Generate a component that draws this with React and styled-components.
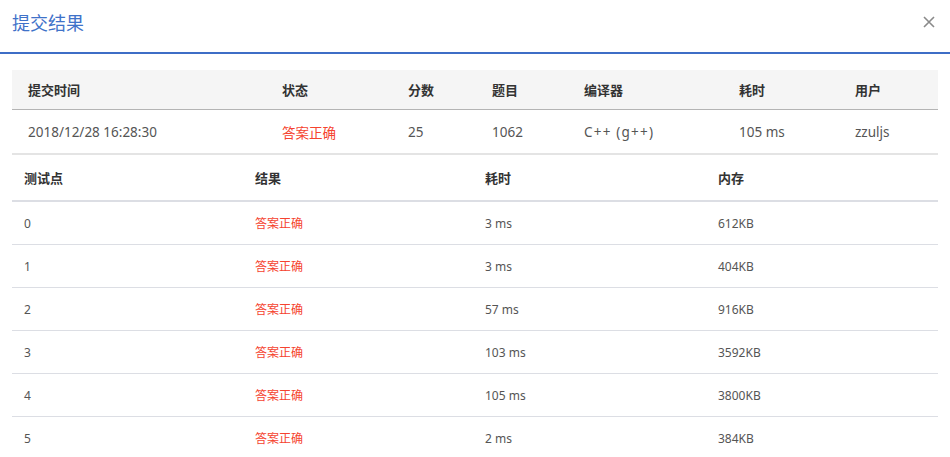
import React from 'react';
import styled, { createGlobalStyle } from 'styled-components';

const GlobalStyle = createGlobalStyle`
  body {
    margin: 0;
    background: #ffffff;
    font-family: "Noto Sans", "Noto Sans CJK SC", sans-serif;
  }
`;

// column widths read off the screenshot
const summaryCols = '254px 126px 84px 92px 155px 116px 1fr';
const caseCols = '231px 230px 233px 1fr';

const summary = {
  head: ['提交时间', '状态', '分数', '题目', '编译器', '耗时', '用户'],
  row: ['2018/12/28 16:28:30', '答案正确', '25', '1062', 'C++ (g++)', '105 ms', 'zzuljs'],
};

const cases = [
  { id: 0, time: '3 ms', mem: '612KB' },
  { id: 1, time: '3 ms', mem: '404KB' },
  { id: 2, time: '57 ms', mem: '916KB' },
  { id: 3, time: '103 ms', mem: '3592KB' },
  { id: 4, time: '105 ms', mem: '3800KB' },
  { id: 5, time: '2 ms', mem: '384KB' },
];

const App = () => {
  return (
    <>
      <GlobalStyle />
      <Modal>
        <Header>
          <Title>提交结果</Title>
          <Close aria-label="close">
            <svg width="12" height="12" viewBox="0 0 12 12">
              <path d="M1 1L11 11M11 1L1 11" stroke="#8a8a8a" strokeWidth="1.6" />
            </svg>
          </Close>
        </Header>
        <Body>
          <SummaryHead>
            {summary.head.map((h) => (
              <SummaryCell key={h} bold>
                {h}
              </SummaryCell>
            ))}
          </SummaryHead>
          <SummaryRow>
            {summary.row.map((v, i) => (
              <SummaryCell key={i} red={i === 1} wide={i === 4}>
                {v}
              </SummaryCell>
            ))}
          </SummaryRow>
          <CaseHead>
            <CaseCell bold>测试点</CaseCell>
            <CaseCell bold>结果</CaseCell>
            <CaseCell bold>耗时</CaseCell>
            <CaseCell bold>内存</CaseCell>
          </CaseHead>
          {cases.map((c) => (
            <CaseRow key={c.id}>
              <CaseCell>{c.id}</CaseCell>
              <CaseCell red>答案正确</CaseCell>
              <CaseCell>{c.time}</CaseCell>
              <CaseCell>{c.mem}</CaseCell>
            </CaseRow>
          ))}
        </Body>
      </Modal>
    </>
  );
};

export default App;

const Modal = styled.div`
  width: 950px;
  height: 457px;
  overflow: hidden;
  background: #fff;
`;

const Header = styled.div`
  display: flex;
  align-items: center;
  justify-content: space-between;
  box-sizing: border-box;
  height: 54px;
  padding: 0 15px 8px 12px;
  border-bottom: 2px solid #3d6dc6;
`;

const Title = styled.h3`
  margin: 0;
  font-size: 18px;
  font-weight: normal;
  color: #3f72c9;
`;

const Close = styled.button`
  border: none;
  background: none;
  padding: 0;
  margin: 0;
  display: flex;
  cursor: pointer;
`;

const Body = styled.div`
  padding: 16px 12px 0 12px;
`;

const SummaryHead = styled.div`
  display: grid;
  grid-template-columns: ${summaryCols};
  align-items: center;
  height: 39px;
  background: #f5f5f5;
  border-bottom: 1px solid #b4b4b4;
`;

const SummaryRow = styled.div`
  display: grid;
  grid-template-columns: ${summaryCols};
  align-items: center;
  height: 43px;
  border-bottom: 2px solid #e4e4e4;
`;

const SummaryCell = styled.div`
  padding-left: 16px;
  font-size: ${(p) => (p.bold ? '13px' : '13.5px')};
  font-weight: ${(p) => (p.bold ? 700 : 400)};
  color: ${(p) => (p.red ? '#f5432f' : p.bold ? '#333' : '#555')};
  letter-spacing: ${(p) => (p.wide ? '1.2px' : '0')};
  white-space: nowrap;
`;

const CaseHead = styled.div`
  display: grid;
  grid-template-columns: ${caseCols};
  align-items: center;
  height: 45px;
  border-bottom: 2px solid #dcdee4;
`;

const CaseRow = styled.div`
  display: grid;
  grid-template-columns: ${caseCols};
  align-items: center;
  height: 42px;
  border-bottom: 1px solid #dcdee4;
`;

const CaseCell = styled.div`
  padding-left: 12px;
  font-size: ${(p) => (p.bold ? '13px' : '12px')};
  font-weight: ${(p) => (p.bold ? 700 : 400)};
  color: ${(p) => (p.red ? '#f5432f' : p.bold ? '#333' : '#555')};
`;
